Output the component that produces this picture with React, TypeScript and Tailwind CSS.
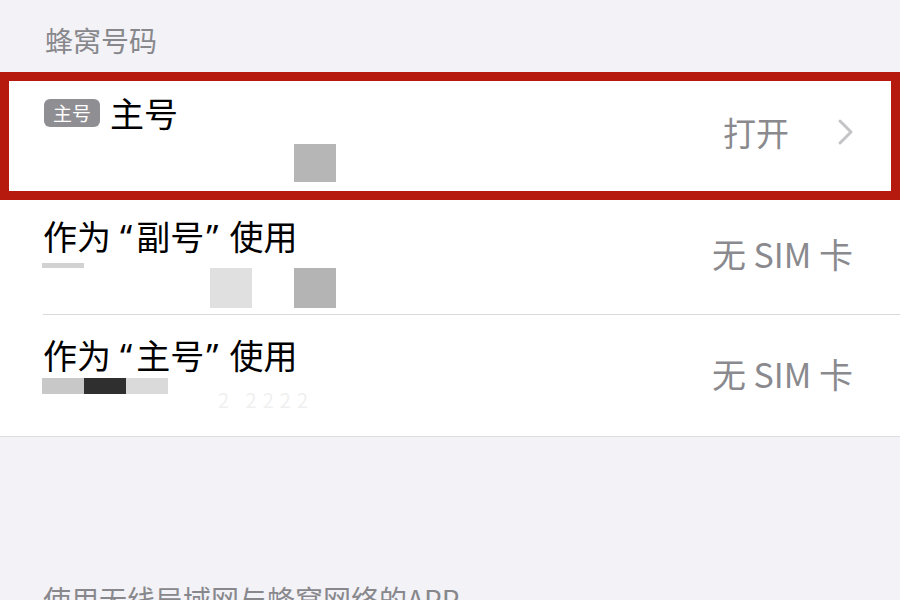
import React from "react";

const font = { fontFamily: '"Noto Sans CJK SC", "Noto Sans", sans-serif' };

function Chevron() {
	return (
		<svg width="18" height="28" viewBox="0 0 18 28" fill="none" className="ml-[48px]">
			<path d="M3 3 L14 14 L3 25" stroke="#c4c4c7" strokeWidth="3" strokeLinecap="round" strokeLinejoin="round" />
		</svg>
	);
}

function Quoted({ text }: { text: string }) {
	return (
		<>
			作为
			<span className="ml-[9px] mr-[4px]" style={{ fontFamily: '"Noto Sans", sans-serif' }}>“</span>
			{text}
			<span className="ml-[2px] mr-[11px]" style={{ fontFamily: '"Noto Sans", sans-serif' }}>”</span>
			使用
		</>
	);
}

export default function App() {
	return (
		<div lang="zh-CN" style={font} className="h-[600px] w-[900px] overflow-hidden bg-[#f2f2f7]">
			{/* section header */}
			<div className="h-[72px] pl-[45px] pt-[22px] text-[28px] leading-[36px] text-[#88888c]">蜂窝号码</div>

			<div className="bg-white">
				{/* main number - highlighted */}
				<div className="h-[128px] border-[9px] border-[#b61a0f] flex items-center justify-between pl-[35px] pr-[36px]">
					<div className="flex flex-col self-stretch pt-[12px]">
						<div className="flex items-center h-[40px]">
							<span className="h-[28px] w-[56px] rounded-[6px] bg-[#8e8e93] text-white text-[19px] leading-[28px] text-center">主号</span>
							<span className="ml-[10px] text-[34px] leading-[40px] text-black">主号</span>
						</div>
						<div className="flex mt-[11px] h-[38px]">
							<div className="w-[250px]" />
							<div className="w-[42px] h-[38px] bg-[#b6b6b6] blur-[0.5px]" />
						</div>
					</div>
					<div className="flex items-center pb-[8px]">
						<span className="text-[33px] leading-[40px] text-[#8a8a8e]">打开</span>
						<Chevron />
					</div>
				</div>

				{/* secondary */}
				<div className="ml-[43px] h-[115px] border-b border-[#d9d9dc] flex items-center justify-between pr-[47px]">
					<div className="flex flex-col self-stretch pt-[16px]">
						<span className="text-[34px] leading-[40px] text-black"><Quoted text="副号" /></span>
						<div className="flex mt-[6px] h-[45px] -ml-[1px]">
							<div className="w-[42px] h-[5px] bg-[#d2d2d2] blur-[0.5px]" />
							<div className="w-[126px]" />
							<div className="w-[42px] h-[40px] self-end bg-[#e0e0e0] blur-[0.5px]" />
							<div className="w-[42px]" />
							<div className="w-[42px] h-[40px] self-end bg-[#b4b4b4] blur-[0.5px]" />
						</div>
					</div>
					<span className="text-[34px] leading-[40px] text-[#8a8a8e] pb-[6px]">无 SIM 卡</span>
				</div>

				{/* primary */}
				<div className="h-[122px] border-b border-[#dedee1] flex items-center justify-between pl-[43px] pr-[47px]">
					<div className="flex flex-col self-stretch pt-[20px]">
						<span className="text-[34px] leading-[40px] text-black"><Quoted text="主号" /></span>
						<div className="flex mt-[2px] h-[16px] -ml-[1px] blur-[0.6px]">
							<div className="w-[42px] h-[16px] bg-[#c8c8c8]" />
							<div className="w-[42px] h-[16px] bg-[#2f2f2f]" />
							<div className="w-[42px] h-[16px] bg-[#dadada]" />
						</div>
						<span className="ml-[175px] -mt-[4px] text-[20px] leading-[20px] tracking-[6px] text-[#f0f0f0]">2 2222</span>
					</div>
					<span className="text-[34px] leading-[40px] text-[#8a8a8e] pb-[4px]">无 SIM 卡</span>
				</div>
			</div>

			<div className="pt-[144px] pl-[43px] text-[28px] leading-[36px] text-[#88888c]">使用无线局域网与蜂窝网络的APP</div>
		</div>
	);
}
